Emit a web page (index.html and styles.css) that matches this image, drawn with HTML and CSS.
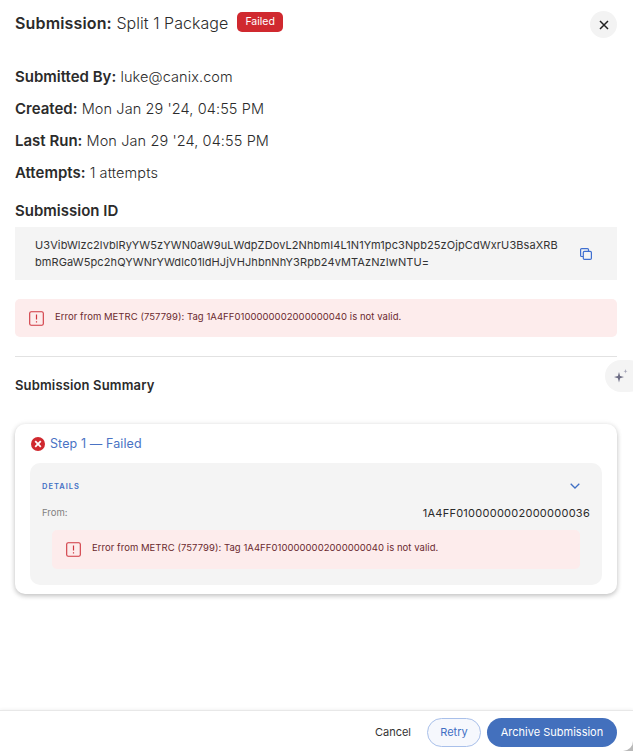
FILE: index.html
```html
<!DOCTYPE html>
<html lang="en">
<head>
<meta charset="utf-8">
<title>Submission</title>
<link rel="stylesheet" href="styles.css">
</head>
<body>
<div class="modal">
  <main class="content">
    <header class="head">
      <h1 class="title"><b>Submission:</b> Split 1 Package</h1>
      <span class="badge">Failed</span>
      <button class="close" aria-label="Close">
        <svg width="10" height="10" viewBox="0 0 10 10"><path d="M1 1l8 8M9 1l-8 8" stroke="#222" stroke-width="1.5" fill="none"/></svg>
      </button>
    </header>
    <section class="meta">
      <p><b>Submitted By:</b> luke@canix.com</p>
      <p><b>Created:</b> Mon Jan 29 '24, 04:55 PM</p>
      <p><b>Last Run:</b> Mon Jan 29 '24, 04:55 PM</p>
      <p><b>Attempts:</b> 1 attempts</p>
    </section>
    <h2 class="id-label">Submission ID</h2>
    <div class="id-box">
      <div class="id-text">U3VibWlzc2lvblRyYW5zYWN0aW9uLWdpZDovL2NhbmI4L1N1Ym1pc3Npb25zOjpCdWxrU3BsaXRB<br>bmRGaW5pc2hQYWNrYWdlc01ldHJjVHJhbnNhY3Rpb24vMTAzNzIwNTU=</div>
      <svg class="copy" width="12" height="12" viewBox="0 0 12 12" fill="none" stroke="#3f6fd0" stroke-width="1.2"><path d="M3 8.500H1.600A1 1 0 0 1 .6 7.500V1.600a1 1 0 0 1 1-1h5.900a1 1 0 0 1 1 1V3"/><rect x="3.300" y="3.300" width="8.100" height="8.100" rx="1.200"/></svg>
    </div>
    <div class="alert alert-top">
      <svg class="alert-icon" width="15" height="15" viewBox="0 0 15 15" fill="none"><rect x="0.7" y="0.7" width="13.6" height="13.6" rx="1.5" stroke="#d0363f" stroke-width="1.1"/><path d="M7.500 3.500v5M7.500 10.200v1.300" stroke="#d0363f" stroke-width="1.200"/></svg>
      <span class="alert-text">Error from METRC (757799): Tag 1A4FF0100000002000000040 is not valid.</span>
    </div>
    <hr class="rule">
    <h3 class="summary">Submission Summary</h3>
    <section class="card">
      <div class="step">
        <svg width="14" height="14" viewBox="0 0 14 14"><circle cx="7" cy="7" r="7" fill="#d0292f"/><path d="M4.200 4.200l5.600 5.600M9.800 4.200l-5.600 5.600" stroke="#fff" stroke-width="1.800"/></svg>
        <span>Step 1 — Failed</span>
      </div>
      <div class="details">
        <div class="details-head">
          <span class="details-label">DETAILS</span>
          <svg width="10" height="6" viewBox="0 0 10 6" fill="none"><path d="M.7.800L5 5l4.300-4.200" stroke="#3f6fc4" stroke-width="1.300"/></svg>
        </div>
        <div class="from">
          <span class="from-label">From:</span>
          <span class="from-value">1A4FF0100000002000000036</span>
        </div>
        <div class="alert alert-inner">
          <svg class="alert-icon" width="15" height="15" viewBox="0 0 15 15" fill="none"><rect x="0.7" y="0.7" width="13.6" height="13.6" rx="1.5" stroke="#d0363f" stroke-width="1.1"/><path d="M7.500 3.500v5M7.500 10.200v1.300" stroke="#d0363f" stroke-width="1.200"/></svg>
          <span class="alert-text">Error from METRC (757799): Tag 1A4FF0100000002000000040 is not valid.</span>
        </div>
      </div>
    </section>
  </main>
  <footer class="foot">
    <button class="btn-cancel">Cancel</button>
    <button class="btn-retry">Retry</button>
    <button class="btn-archive">Archive Submission</button>
  </footer>
  <button class="spark" aria-label="Assistant">
    <svg width="16" height="16" viewBox="0 0 16 16" fill="#6c6c84"><path d="M6 4l1.100 4L11 9.100 7.100 10.200 6 14.500 4.900 10.200 1 9.100 4.900 8z"/><path d="M12.500 1l.5 1.700 1.500.5-1.500.5-.5 1.700-.5-1.700-1.500-.5 1.500-.5z" fill="#a5a5b8"/></svg>
  </button>
</div>
</body>
</html>
```
FILE: styles.css
```css
* { box-sizing: border-box; }
html, body { margin: 0; height: 100%; }
body { background: #b9b9b9; font-family: Inter, "Liberation Sans", sans-serif; color: #2b2b2b; overflow: hidden; }
.modal { position: relative; height: 751px; display: flex; flex-direction: column; background: #fff; border-radius: 0 0 10px 0; overflow: hidden; }
.content { flex: 1; padding: 0 16px 0 15px; }
.head { display: flex; align-items: center; height: 46px; position: relative; }
.title { margin: 0; font-size: 16px; font-weight: 300; letter-spacing: 0.05px; line-height: 20px; color: #2b2b2b; }
.title b { font-weight: 600; color: #2b2b2b; letter-spacing: 0.15px; }
.badge { margin-left: 9px; margin-top: -2px; height: 20px; padding: 0 8px; border-radius: 5px; background: #d0292f; color: #fff; font-size: 10.5px; line-height: 20px; font-weight: 400; }
.close { position: absolute; right: 0; top: 11px; width: 27px; height: 27px; border: 0; border-radius: 50%; background: #f3f3f3; padding: 0; display: flex; align-items: center; justify-content: center; }
.meta { margin-top: 15px; }
.meta p { margin: 0; height: 32px; font-size: 14.5px; font-weight: 300; line-height: 32px; letter-spacing: 0.1px; color: #2b2b2b; }
.meta b { font-weight: 600; color: #2b2b2b; letter-spacing: 0; font-size: 15px; }
.id-label { margin: 12px 0 0; font-size: 15px; font-weight: 600; line-height: 20px; color: #2b2b2b; }
.id-box { margin-top: 6px; min-height: 53px; background: #f4f4f4; display: flex; align-items: center; justify-content: space-between; padding: 0 25px 0 20px; }
.id-text { font-size: 11px; line-height: 17px; letter-spacing: 0.1px; white-space: nowrap; color: #333; }
.copy { flex: none; }
.alert { display: flex; align-items: center; background: #fdecec; color: #6b2a2f; font-size: 9.5px; letter-spacing: 0.05px; border-radius: 5px; }
.alert-text { margin-top: -4px; }
.alert-top { margin-top: 19px; height: 38px; padding: 0 14px; gap: 11px; }
.alert-icon { flex: none; }
.rule { margin: 19px 0 0; border: 0; border-top: 1px solid #e2e2e2; }
.summary { margin: 19px 0 0; font-size: 13px; font-weight: 600; line-height: 18px; letter-spacing: 0.15px; color: #2b2b2b; }
.card { margin-top: 30px; height: 170px; background: #fff; border-radius: 10px; box-shadow: 0 2px 5px rgba(0,0,0,.22), 0 0 6px rgba(0,0,0,.06); padding: 0 15px; }
.step { display: flex; align-items: center; gap: 5px; height: 39px; padding-left: 1px; font-size: 12.5px; font-weight: 400; color: #4a73c4; letter-spacing: 0.1px; }
.details { height: 122px; background: #f4f4f4; border-radius: 10px; padding: 0 12px; }
.details-head { display: flex; align-items: center; justify-content: space-between; height: 46px; padding-right: 10px; }
.details-label { font-size: 7.5px; font-weight: 600; letter-spacing: 1px; color: #3f6fc4; }
.from { display: flex; justify-content: space-between; align-items: center; height: 8px; }
.from-label { font-size: 9.5px; color: #808080; margin-top: -2px; }
.from-value { font-size: 11px; font-weight: 400; color: #2b2b2b; letter-spacing: 0.26px; }
.alert-inner { margin: 13px 10px 0 10px; height: 39px; padding: 0 14px; gap: 11px; }
.foot { height: 41px; border-top: 1px solid #e8e8e8; display: flex; align-items: center; justify-content: flex-end; padding: 2px 16px 0 0; box-shadow: 0 -1px 3px rgba(0,0,0,.05); gap: 6px; }
.foot button { font-family: inherit; font-size: 11px; height: 29px; border-radius: 15px; padding: 0; }
.btn-cancel { border: 0; background: transparent; color: #333; width: 50px; margin-right: 3px; }
.btn-retry { width: 54px; border: 1px solid #a9c0ea; background: #f6f8fd; color: #3f6fc4; }
.btn-archive { width: 130px; border: 0; background: #4370bd; color: #fff; }
.spark { position: absolute; left: 605px; top: 360px; width: 40px; height: 32px; border: 0; border-radius: 16px; background: #f4f4f4; padding: 0 0 0 8px; display: flex; align-items: center; }
```
